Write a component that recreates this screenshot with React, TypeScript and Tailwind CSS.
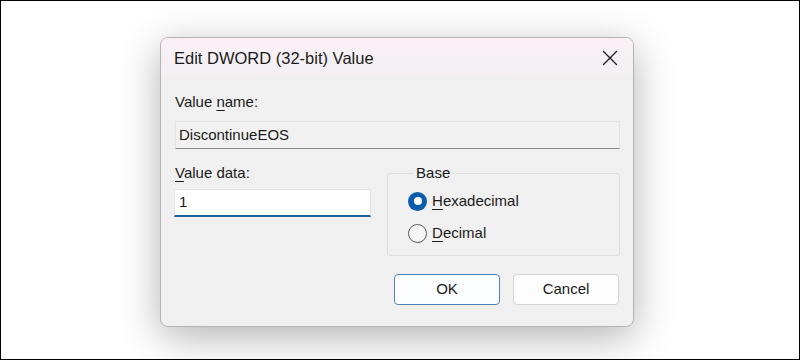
import React from 'react';

function Mnemonic({ children }: { children: React.ReactNode }) {
  return <span className="underline decoration-1 underline-offset-[3px]">{children}</span>;
}

function CloseIcon() {
  return (
    <svg width="16" height="16" viewBox="0 0 16 16" fill="none">
      <path d="M1.5 1.5 L14.5 14.5 M14.5 1.5 L1.5 14.5" stroke="#1f1f1f" strokeWidth="1.4" strokeLinecap="round" />
    </svg>
  );
}

function Radio({ checked, children }: { checked?: boolean; children: React.ReactNode }) {
  return (
    <div className="flex items-center h-[24px]">
      {checked ? (
        <span className="w-[19px] h-[19px] rounded-full bg-[#0b5cad] flex items-center justify-center">
          <span className="w-[8px] h-[8px] rounded-full bg-white" />
        </span>
      ) : (
        <span className="w-[19px] h-[19px] rounded-full border border-[#5a5a5a] bg-[#f7f7f7]" />
      )}
      <span className="ml-[5px]">{children}</span>
    </div>
  );
}

export default function App() {
  return (
    <div
      className="w-[800px] h-[360px] border border-black bg-white pl-[159px] pt-[36px] text-[15px] text-[#1a1a1a]"
      style={{ fontFamily: '"Liberation Sans", Arial, sans-serif' }}
    >
      <div className="w-[474px] rounded-[8px] border border-[#b3b3b3] bg-[#f0f0f0] shadow-[0_10px_40px_rgba(0,0,0,0.3)] overflow-hidden">
        {/* Title bar */}
        <div className="h-[40px] flex items-center justify-between pl-[13px] pr-[15px] bg-gradient-to-b from-[#f9f0f6] to-[#f3f0f2]">
          <span className="text-[16.5px] text-[#1a1a1a]">Edit DWORD (32-bit) Value</span>
          <CloseIcon />
        </div>

        <div className="pl-[14px] pr-[13px] pb-[21px]">
          {/* Value name */}
          <div className="mt-[14px] leading-[20px]">
            Value <Mnemonic>n</Mnemonic>ame:
          </div>
          <div className="mt-[9px] h-[28px] flex items-center pl-[3px] bg-[#f1f1f1] border border-[#e4e4e4] border-b-[#8a8a8a]">
            DiscontinueEOS
          </div>

          {/* Data + base */}
          <div className="flex items-start mt-[14px] -ml-[1px]">
            <div className="w-[198px]">
              <div className="leading-[20px] pl-[1px]">
                <Mnemonic>V</Mnemonic>alue data:
              </div>
              <div className="mt-[6px] h-[28px] flex items-center pl-[4px] bg-white border border-[#e4e4e4] border-b-2 border-b-[#1f5f9e]">
                1
              </div>
            </div>

            <fieldset className="ml-[16px] w-[234px] border border-[#dedede] rounded-[3px] pl-[20px] pt-[6px] pb-[10px]">
              <legend className="ml-[6px] px-[2px] leading-[20px]">Base</legend>
              <Radio checked>
                <Mnemonic>H</Mnemonic>exadecimal
              </Radio>
              <div className="mt-[8px]">
                <Radio>
                  <Mnemonic>D</Mnemonic>ecimal
                </Radio>
              </div>
            </fieldset>
          </div>

          {/* Buttons */}
          <div className="flex justify-end gap-[13px] mt-[18px] pr-[1px]">
            <button className="w-[106px] h-[31px] rounded-[4px] border border-[#4f80b8] bg-[#fcfdff] text-[#1a1a1a]">
              OK
            </button>
            <button className="w-[106px] h-[31px] rounded-[4px] border border-[#d3d3d3] bg-[#fdfdfd] text-[#1a1a1a]">
              Cancel
            </button>
          </div>
        </div>
      </div>
    </div>
  );
}
